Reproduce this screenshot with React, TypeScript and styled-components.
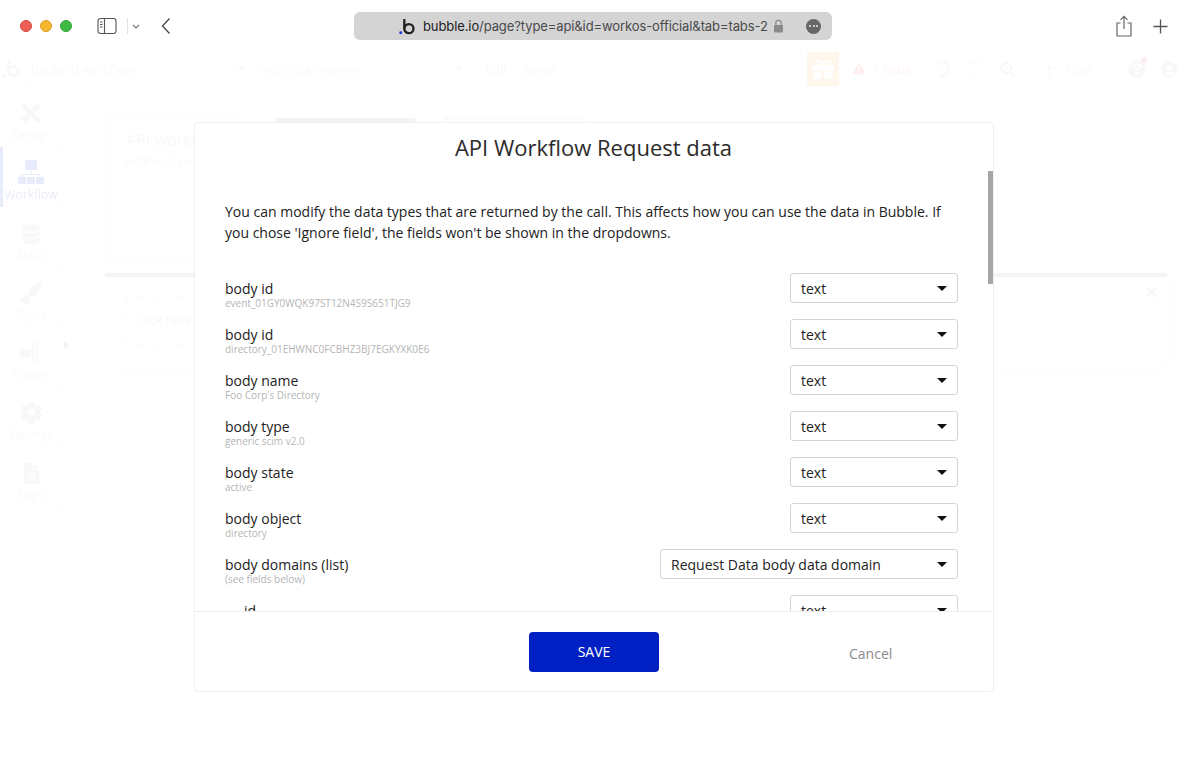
import React from "react";
import styled, { createGlobalStyle } from "styled-components";
import {
  FaCog,
  FaDatabase,
  FaExclamationTriangle,
  FaFileAlt,
  FaGift,
  FaPaintBrush,
  FaQuestionCircle,
  FaSearch,
  FaTimes,
  FaUserCircle,
} from "react-icons/fa";

const GlobalStyle = createGlobalStyle`
  html, body {
    margin: 0;
    padding: 0;
    background: #fff;
    font-family: "Open Sans", "Liberation Sans", sans-serif;
  }
`;

const Page = styled.div`
  position: relative;
  width: 1187px;
  height: 772px;
  overflow: hidden;
  background: #fff;
`;

/* browser chrome */

const BrowserBar = styled.header`
  display: flex;
  align-items: center;
  height: 52px;
  padding: 0 17px 0 20px;
  box-sizing: border-box;
`;

const TrafficLights = styled.div`
  display: flex;
  gap: 8px;
  margin-right: 25px;
`;

const Light = styled.span<{ $color: string; $edge: string }>`
  width: 12px;
  height: 12px;
  border-radius: 50%;
  box-sizing: border-box;
  background: ${(p) => p.$color};
  border: 1px solid ${(p) => p.$edge};
`;

const ChromeIcon = styled.svg<{ $gap?: number }>`
  display: block;
  flex: none;
  margin-right: ${(p) => p.$gap ?? 0}px;
`;

const AddressBar = styled.div`
  display: flex;
  align-items: center;
  width: 478px;
  height: 28px;
  margin-right: 283px;
  padding: 0 11px 0 45px;
  box-sizing: border-box;
  border-radius: 6px;
  background: #d4d4d4;
`;

const Url = styled.span`
  margin: 0 5px 0 7px;
  font-family: Inter, "Liberation Sans", sans-serif;
  font-size: 13px;
  letter-spacing: -0.1px;
  color: #4a4a4a;
  white-space: nowrap;

  b {
    font-weight: 400;
    color: #1d1d1d;
  }
`;

const MoreDots = styled.span`
  display: flex;
  align-items: center;
  justify-content: center;
  gap: 1.5px;
  width: 15px;
  height: 15px;
  margin-left: auto;
  border-radius: 50%;
  background: #666;

  i {
    width: 2px;
    height: 2px;
    border-radius: 50%;
    background: #e8e8e8;
  }
`;

/* editor behind the dialog */

const Editor = styled.div`
  height: 720px;
  display: flex;
  flex-direction: column;
  filter: blur(0.6px);
`;

const EditorHeader = styled.div`
  display: flex;
  align-items: center;
  flex: none;
  height: 34px;
  border-bottom: 1px solid #ddd;
  font-size: 12px;
  color: #b4b4b4;
`;

const HeaderLogo = styled.div`
  display: flex;
  align-items: center;
  justify-content: center;
  width: 25px;
  height: 100%;
  border-right: 1px solid #ddd;
  box-sizing: border-box;
`;

const PageSelect = styled.div<{ $width: number }>`
  display: flex;
  align-items: center;
  justify-content: space-between;
  width: ${(p) => p.$width}px;
  padding: 0 0 0 6px;
  box-sizing: border-box;
  white-space: nowrap;

  &::after {
    content: "";
    border: 4px solid transparent;
    border-top: 5px solid #bbb;
    margin-top: 5px;
  }
`;

const HeaderText = styled.span<{ $left: number; $color?: string }>`
  margin-left: ${(p) => p.$left}px;
  color: ${(p) => p.$color ?? "inherit"};
  white-space: nowrap;
`;

const GiftBox = styled.div`
  display: flex;
  align-items: center;
  justify-content: center;
  width: 32px;
  height: 100%;
  margin-left: 251px;
  background: #ffa52e;
  color: #fff;
`;

const HeaderIconSlot = styled.span<{ $left: number; $color?: string }>`
  display: flex;
  margin-left: ${(p) => p.$left}px;
  color: ${(p) => p.$color ?? "#b4b4b4"};
`;

const HelpSlot = styled(HeaderIconSlot)`
  position: relative;

  &::after {
    content: "";
    position: absolute;
    top: -3px;
    right: -1px;
    width: 6px;
    height: 6px;
    border-radius: 50%;
    background: #ff3030;
  }
`;

const EditorBody = styled.div`
  display: flex;
  flex: 1;
  min-height: 0;
`;

const Sidebar = styled.nav`
  flex: none;
  width: 60px;
  border-right: 1px solid #ddd;
  box-sizing: border-box;
`;

const SideItem = styled.div<{ $active?: boolean }>`
  display: flex;
  flex-direction: column;
  align-items: center;
  justify-content: flex-end;
  height: 60px;
  padding-bottom: 3px;
  margin-left: 3px;
  box-sizing: border-box;
  border-bottom: 1px solid #ddd;
  font-size: 12px;
  line-height: 16px;
  color: ${(p) => (p.$active ? "#0020c4" : "#b4b4b4")};
  box-shadow: ${(p) => (p.$active ? "-4px 0 0 #0020c4" : "none")};

  svg {
    margin-bottom: 3px;
  }
`;

const Rail = styled.div`
  position: relative;
  flex: none;
  width: 15px;
  border-right: 1px solid #ddd;
  box-sizing: border-box;

  &::after {
    content: "";
    position: absolute;
    top: 254px;
    left: 4px;
    border: 4px solid transparent;
    border-left: 5px solid #888;
  }
`;

const Canvas = styled.main`
  flex: 1;
  padding: 31px 20px 0 30px;
  min-width: 0;
`;

const CardRow = styled.div`
  display: flex;
  gap: 30px;
  height: 140px;
`;

const EventCard = styled.div`
  width: 140px;
  padding: 10px 0 0 20px;
  box-sizing: border-box;
  border: 1px solid #ccc;
  white-space: nowrap;
  overflow: hidden;
`;

const EventTitle = styled.div`
  font-size: 16px;
  line-height: 22px;
  color: #a8a8a8;
`;

const EventName = styled.div`
  margin: 2px 0 0 -3px;
  font-size: 12px;
  color: #b4b4b4;
`;

const ActiveTab = styled.div`
  width: 140px;
  background: #8a8a8a;
`;

const AddTab = styled.div`
  width: 140px;
  border: 1px dashed #888;
  box-sizing: border-box;
`;

const ActionPanel = styled.section`
  position: relative;
  width: 1062px;
  height: 94px;
  margin-top: 15px;
  padding: 19px 0 0 21px;
  box-sizing: border-box;
  border-top: 4px solid #8a8a8a;
  border-radius: 0 0 8px 8px;
  box-shadow: 2px 2px 8px rgba(0, 0, 0, 0.15);
`;

const ClickHere = styled.div`
  width: 300px;
  height: 49px;
  padding-left: 10px;
  box-sizing: border-box;
  border: 1px dashed #bbb;
  font-size: 12px;
  line-height: 47px;
  color: #a8a8a8;
`;

const PanelClose = styled.span`
  position: absolute;
  top: 8px;
  right: 8px;
  display: flex;
  color: #b4b4b4;
`;

/* dialog */

const Scrim = styled.div`
  position: absolute;
  inset: 52px 0 0 0;
  background: rgba(255, 255, 255, 0.91);
`;

const Dialog = styled.div`
  position: absolute;
  left: 194px;
  top: 122px;
  display: flex;
  flex-direction: column;
  width: 800px;
  height: 570px;
  box-sizing: border-box;
  border: 1px solid #f0f0f0;
  border-radius: 4px;
  background: #fff;
  color: #222;
`;

const DialogTitle = styled.h2`
  flex: none;
  height: 48px;
  margin: 0;
  padding-right: 1px;
  font-size: 22px;
  font-weight: 400;
  line-height: 48px;
  text-align: center;
  color: #2b2b2b;
`;

const DialogScroll = styled.div`
  position: relative;
  flex: 1;
  min-height: 0;
  overflow: hidden;
  padding: 30px 35px 0 30px;
`;

const ScrollThumb = styled.div`
  position: absolute;
  top: 0;
  right: 0;
  width: 5px;
  height: 113px;
  background: #a6a6a6;
`;

const Intro = styled.p`
  margin: 0 0 30px;
  font-size: 14px;
  line-height: 21px;
  color: #222;
`;

const FieldList = styled.div`
  display: flex;
  flex-direction: column;
  gap: 16px;
`;

const FieldRow = styled.div<{ $nested?: boolean }>`
  display: flex;
  align-items: flex-start;
  justify-content: space-between;
  height: 30px;
  padding-left: ${(p) => (p.$nested ? 19 : 0)}px;
`;

const FieldText = styled.div`
  padding-top: 7px;
`;

const FieldName = styled.div`
  font-size: 14px;
  line-height: 18px;
  color: #222;
`;

const FieldSample = styled.div`
  font-size: 10px;
  line-height: 11px;
  color: #b5b5b5;
`;

const TypeSelect = styled.div<{ $wide?: boolean }>`
  display: flex;
  align-items: center;
  justify-content: space-between;
  flex: none;
  width: ${(p) => (p.$wide ? 298 : 168)}px;
  height: 30px;
  padding: 0 10px;
  box-sizing: border-box;
  border: 1px solid #d4d4d4;
  border-radius: 3px;
  font-size: 14px;
  color: #222;

  &::after {
    content: "";
    border: 5px solid transparent;
    border-top: 5px solid #111;
    border-bottom: 0;
  }
`;

const DialogFooter = styled.footer`
  display: flex;
  flex: none;
  height: 80px;
  padding: 20px 0 0 334px;
  box-sizing: border-box;
  border-top: 1px solid #eee;
`;

const SaveButton = styled.button`
  width: 130px;
  height: 40px;
  padding: 0 0 1px;
  border: 0;
  border-radius: 4px;
  background: #0020c4;
  color: #fff;
  font: 400 14px "Open Sans", sans-serif;
`;

const CancelLink = styled.span`
  margin: 12px 0 0 190px;
  font-size: 14px;
  line-height: 20px;
  color: #8a8a8a;
`;

type Field = {
  name: string;
  sample?: string;
  type?: string;
  wide?: boolean;
  nested?: boolean;
};

const fields: Field[] = [
  { name: "body id", sample: "event_01GY0WQK97ST12N4S9S651TJG9" },
  { name: "body id", sample: "directory_01EHWNC0FCBHZ3BJ7EGKYXK0E6" },
  { name: "body name", sample: "Foo Corp's Directory" },
  { name: "body type", sample: "generic scim v2.0" },
  { name: "body state", sample: "active" },
  { name: "body object", sample: "directory" },
  {
    name: "body domains (list)",
    sample: "(see fields below)",
    type: "Request Data body data domain",
    wide: true,
  },
  { name: "id", nested: true },
];

const BubbleLogo = ({ size, color, dot }: { size: number; color: string; dot: string }) => (
  <ChromeIcon width={size} height={size} viewBox="0 0 16 16">
    <circle cx="1.6" cy="13.9" r="1.4" fill={dot} />
    <path d="M5 1v9.2" stroke={color} strokeWidth="2.2" fill="none" />
    <circle cx="9.3" cy="10" r="4.3" stroke={color} strokeWidth="2.2" fill="none" />
  </ChromeIcon>
);

const ArcArrow = ({ flip, color }: { flip?: boolean; color: string }) => (
  <svg width="18" height="18" viewBox="0 0 18 18" style={flip ? { transform: "scaleX(-1)" } : undefined}>
    <path d="M3.5 3.5 A7.2 7.2 0 1 1 6 15.8" fill="none" stroke={color} strokeWidth="2" />
    <path d="M1 2.5 L6.5 1.5 L5.5 6.5 Z" fill={color} />
  </svg>
);

export default function App() {
  return (
    <Page>
      <GlobalStyle />
      <BrowserBar>
        <TrafficLights>
          <Light $color="#ee5f57" $edge="#d5493f" />
          <Light $color="#f6b62e" $edge="#d99e24" />
          <Light $color="#3fbb44" $edge="#33a338" />
        </TrafficLights>
        <ChromeIcon $gap={10} width="20" height="18" viewBox="0 0 20 18">
          <rect x="1" y="1.5" width="18" height="15" rx="2.5" fill="none" stroke="#555" strokeWidth="1.1" />
          <path d="M7.5 1.5v15" stroke="#555" strokeWidth="1.1" />
          <path d="M3 5h2.5M3 7.5h2.5M3 10h2.5" stroke="#555" strokeWidth="1" />
        </ChromeIcon>
        <ChromeIcon $gap={18} width="16" height="18" viewBox="0 0 16 18">
          <path d="M0.5 1v16" stroke="#e3e3e3" />
          <path d="M6 8l3 3 3-3" fill="none" stroke="#777" strokeWidth="1.2" />
        </ChromeIcon>
        <ChromeIcon $gap={183} width="10" height="18" viewBox="0 0 10 18">
          <path d="M8.5 1.5L1.5 9l7 7.5" fill="none" stroke="#444" strokeWidth="1.3" />
        </ChromeIcon>
        <AddressBar>
          <BubbleLogo size={17} color="#222" dot="#1a3fe0" />
          <Url>
            <b>bubble.io</b>/page?type=api&amp;id=workos-official&amp;tab=tabs-2
          </Url>
          <ChromeIcon width="11" height="14" viewBox="0 0 11 14">
            <path d="M2.8 6V4a2.7 2.7 0 0 1 5.4 0v2" fill="none" stroke="#8a8a8a" strokeWidth="1.2" />
            <rect x="1" y="6" width="9" height="7.5" rx="1" fill="#8a8a8a" />
          </ChromeIcon>
          <MoreDots>
            <i />
            <i />
            <i />
          </MoreDots>
        </AddressBar>
        <ChromeIcon $gap={20} width="18" height="22" viewBox="0 0 18 22">
          <path d="M5.5 8H2v13h14V8h-3.5" fill="none" stroke="#666" strokeWidth="1.2" />
          <path d="M9 14V1.5M5.5 4.8L9 1.3l3.5 3.5" fill="none" stroke="#666" strokeWidth="1.2" />
        </ChromeIcon>
        <ChromeIcon width="15" height="15" viewBox="0 0 15 15">
          <path d="M7.5 0.5v14M0.5 7.5h14" stroke="#555" strokeWidth="1.3" />
        </ChromeIcon>
      </BrowserBar>

      <Editor>
        <EditorHeader>
          <HeaderLogo>
            <BubbleLogo size={18} color="#a0a0a0" dot="#a0a0a0" />
          </HeaderLogo>
          <PageSelect $width={220}>Backend workflows</PageSelect>
          <HeaderText $left={10} />
          <PageSelect $width={208}>webhook-receiver</PageSelect>
          <HeaderText $left={23}>Edit</HeaderText>
          <HeaderText $left={15}>Saved</HeaderText>
          <GiftBox>
            <FaGift size={22} />
          </GiftBox>
          <HeaderIconSlot $left={14} $color="#ff3a3a">
            <FaExclamationTriangle size={12} />
          </HeaderIconSlot>
          <HeaderText $left={8} $color="#ff6a6a">
            1 issue
          </HeaderText>
          <HeaderIconSlot $left={22}>
            <ArcArrow color="#b4b4b4" />
          </HeaderIconSlot>
          <HeaderIconSlot $left={14}>
            <ArcArrow flip color="#d8d8d8" />
          </HeaderIconSlot>
          <HeaderIconSlot $left={17}>
            <FaSearch size={15} />
          </HeaderIconSlot>
          <HeaderIconSlot $left={32}>
            <svg width="12" height="16" viewBox="0 0 12 16">
              <path d="M2 1v14M10 1v3c0 3-8 3-8 7" fill="none" stroke="#b4b4b4" strokeWidth="1.3" />
            </svg>
          </HeaderIconSlot>
          <HeaderText $left={7}>Main</HeaderText>
          <HelpSlot $left={34}>
            <FaQuestionCircle size={18} />
          </HelpSlot>
          <HeaderIconSlot $left={15}>
            <FaUserCircle size={17} />
          </HeaderIconSlot>
        </EditorHeader>
        <EditorBody>
          <Sidebar>
            <SideItem>
              <svg width="22" height="22" viewBox="0 0 24 24">
                <path d="M5 1l18 18-1 3-3 1L1 5z" fill="#b4b4b4" />
                <path d="M19 1l4 4L5 23l-4-4z" fill="#b4b4b4" />
                <path d="M8 14l2 2M11 11l2 2M14 8l2 2" stroke="#fff" strokeWidth="1" />
              </svg>
              Design
            </SideItem>
            <SideItem $active>
              <svg width="26" height="24" viewBox="0 0 26 24" fill="#0020c4">
                <rect x="7" y="0" width="12" height="10" />
                <path d="M12.5 10h1v4h9v3h-1v-2h-17v2h-1v-3h9z" />
                <rect x="0" y="17" width="8" height="7" />
                <rect x="9" y="17" width="8" height="7" />
                <rect x="18" y="17" width="8" height="7" />
              </svg>
              Workflow
            </SideItem>
            <SideItem>
              <FaDatabase size={20} />
              Data
            </SideItem>
            <SideItem>
              <FaPaintBrush size={22} />
              Styles
            </SideItem>
            <SideItem>
              <svg width="24" height="24" viewBox="0 0 24 24">
                <path d="M1 9h11v8H9v4H8v-4H5v4H4v-4H1z" fill="#b4b4b4" />
                <path d="M14 20V6a3 3 0 0 1 8 0" fill="none" stroke="#b4b4b4" strokeWidth="2" />
                <path d="M18 6v14a2 2 0 0 1-4 0" fill="none" stroke="#b4b4b4" strokeWidth="2" />
              </svg>
              Plugins
            </SideItem>
            <SideItem>
              <FaCog size={23} />
              Settings
            </SideItem>
            <SideItem>
              <FaFileAlt size={21} />
              Logs
            </SideItem>
          </Sidebar>
          <Rail />
          <Canvas>
            <CardRow>
              <EventCard>
                <EventTitle>API workflow</EventTitle>
                <EventName>webhook-receiver</EventName>
              </EventCard>
              <ActiveTab />
              <AddTab />
            </CardRow>
            <ActionPanel>
              <ClickHere>Click here to add an action...</ClickHere>
              <PanelClose>
                <FaTimes size={15} />
              </PanelClose>
            </ActionPanel>
          </Canvas>
        </EditorBody>
      </Editor>

      <Scrim />

      <Dialog>
        <DialogTitle>API Workflow Request data</DialogTitle>
        <DialogScroll>
          <ScrollThumb />
          <Intro>
            You can modify the data types that are returned by the call. This affects how you can use the
            data in Bubble. If you chose 'Ignore field', the fields won't be shown in the dropdowns.
          </Intro>
          <FieldList>
            {fields.map((field, index) => (
              <FieldRow key={index} $nested={field.nested}>
                <FieldText>
                  <FieldName>{field.name}</FieldName>
                  {field.sample && <FieldSample>{field.sample}</FieldSample>}
                </FieldText>
                <TypeSelect $wide={field.wide}>{field.type ?? "text"}</TypeSelect>
              </FieldRow>
            ))}
          </FieldList>
        </DialogScroll>
        <DialogFooter>
          <SaveButton>SAVE</SaveButton>
          <CancelLink>Cancel</CancelLink>
        </DialogFooter>
      </Dialog>
    </Page>
  );
}
